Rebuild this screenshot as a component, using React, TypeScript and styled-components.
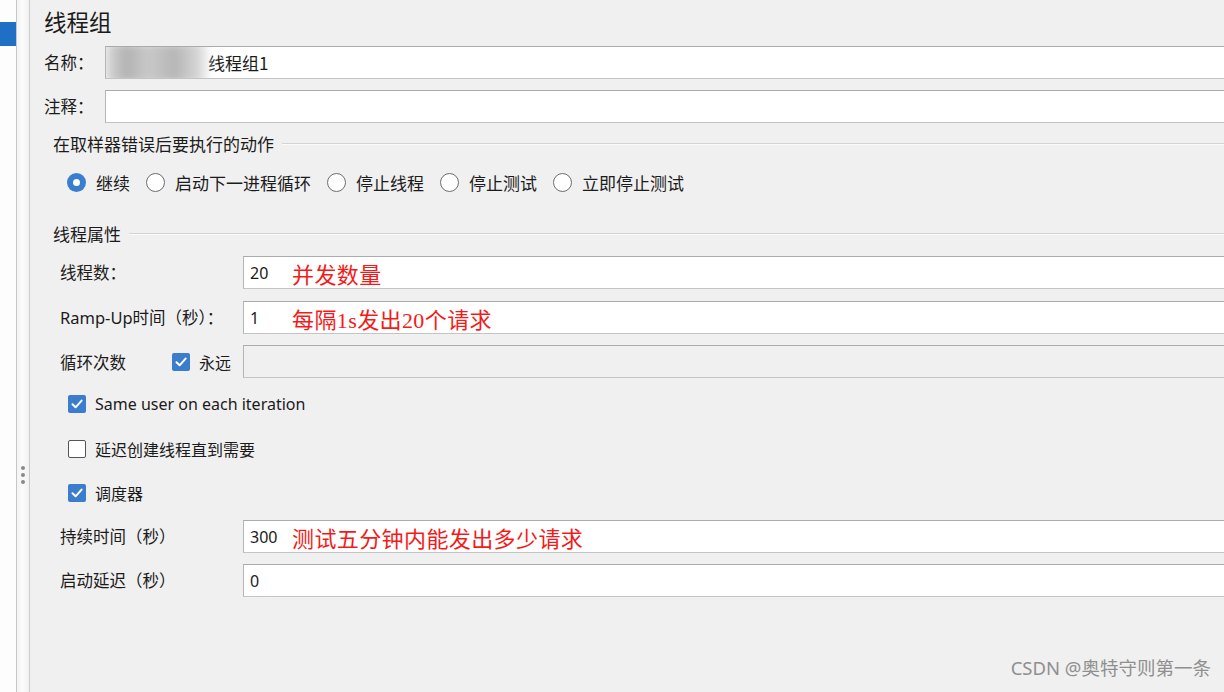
import React from "react";
import styled, { createGlobalStyle } from "styled-components";

const Global = createGlobalStyle`
  html, body { margin: 0; padding: 0; background: #f0f0f0; }
  body { font-family: "Noto Sans", "Noto Sans CJK SC", sans-serif; }
  * { box-sizing: border-box; }
`;

const Page = styled.div`
  position: relative;
  display: flex;
  width: 1224px;
  height: 692px;
  overflow: hidden;
  background: #f0f0f0;
  color: #1b1b1b;
  font-family: "Noto Sans", "Noto Sans CJK SC", sans-serif;
`;

const TreeStrip = styled.div`
  width: 16px;
  flex: none;
  background: #fdfdfd;
  padding-top: 22px;
`;

const Selected = styled.div`
  height: 24px;
  background: #1f6fc5;
`;

const Splitter = styled.div`
  width: 14px;
  flex: none;
  border-left: 1px solid #c6c6c6;
  border-right: 1px solid #cdcdcd;
  background: linear-gradient(to right, #f3f3f3, #fbfbfb 50%, #f1f1f1);
  display: flex;
  flex-direction: column;
  align-items: center;
  padding-top: 466px;
  gap: 3px;
`;

const Dot = styled.span`
  width: 4px;
  height: 4px;
  border-radius: 50%;
  background: #8a8a8a;
`;

const Main = styled.div`
  flex: 1;
  min-width: 0;
  display: flex;
  flex-direction: column;
  background: #f0f0f0;
`;

const Title = styled.div`
  margin: 7px 0 0 14px;
  font-size: 22.5px;
  line-height: 28px;
  font-family: "Noto Sans CJK SC", sans-serif;
`;

const NameRow = styled.div<{ $top: number }>`
  display: grid;
  grid-template-columns: 61px 1fr;
  align-items: center;
  margin-top: ${(p) => p.$top}px;
  padding-left: 14px;
`;

const Label = styled.span`
  font-size: 16.5px;
  line-height: 22px;
  font-family: "Noto Sans", "Noto Sans CJK SC", sans-serif;
  white-space: nowrap;
`;

const Input = styled.div<{ $h?: number; $disabled?: boolean }>`
  position: relative;
  height: ${(p) => p.$h ?? 33}px;
  margin-right: -4px;
  background: ${(p) => (p.$disabled ? "#f0f0f0" : "#ffffff")};
  border: 1px solid #c4c4c4;
  border-top-color: #ababab;
  border-left-color: #b5b5b5;
  display: flex;
  align-items: center;
  padding-left: 6px;
  overflow: hidden;
  font-size: 16px;
  white-space: nowrap;
`;

const Blur = styled.span`
  flex: none;
  width: 103px;
  height: 40px;
  margin-left: -7px;
  background: linear-gradient(
    to right,
    #dcdcdc 0%,
    #b2b2b2 20%,
    #c9c9c9 42%,
    #b6b6b6 68%,
    #d8d8d8 92%,
    #f4f4f4 100%
  );
  filter: blur(4px);
`;

const NameText = styled.span`
  font-size: 17px;
  font-family: "Noto Sans CJK SC", sans-serif;
`;

const GroupHead = styled.div<{ $top: number }>`
  display: flex;
  align-items: center;
  gap: 8px;
  margin-top: ${(p) => p.$top}px;
  padding-left: 23px;
  height: 22px;
  font-size: 17px;
  font-family: "Noto Sans CJK SC", sans-serif;
  &::after {
    content: "";
    flex: 1;
    height: 0;
    border-top: 1px solid #d3d3d3;
    box-shadow: 0 1px 0 #fbfbfb;
  }
`;

const RadioRow = styled.div`
  display: flex;
  align-items: center;
  gap: 16px;
  margin-top: 16px;
  padding-left: 37px;
  height: 24px;
`;

const RadioItem = styled.label`
  display: flex;
  align-items: center;
  gap: 10px;
  font-size: 17px;
  font-family: "Noto Sans CJK SC", sans-serif;
`;

const RadioDot = styled.span<{ $on?: boolean }>`
  width: 19px;
  height: 19px;
  border-radius: 50%;
  flex: none;
  background: ${(p) => (p.$on ? "#3a7fcf" : "#ffffff")};
  border: ${(p) => (p.$on ? "none" : "1.5px solid #6d6d6d")};
  display: flex;
  align-items: center;
  justify-content: center;
  &::after {
    content: "";
    display: ${(p) => (p.$on ? "block" : "none")};
    width: 7px;
    height: 7px;
    border-radius: 50%;
    background: #ffffff;
  }
`;

const FieldRow = styled.div<{ $top: number }>`
  display: grid;
  grid-template-columns: 183px 1fr;
  align-items: center;
  margin-top: ${(p) => p.$top}px;
  padding-left: 30px;
`;

const Value = styled.span`
  font-family: "Noto Sans", sans-serif;
  font-size: 16px;
  width: 42px;
  flex: none;
`;

const Note = styled.span`
  color: #f51a1a;
  font-size: 22px;
  font-family: "Liberation Serif", "Noto Sans CJK SC", serif;
  letter-spacing: 0.4px;
`;

const LoopCell = styled.div`
  display: flex;
  align-items: center;
`;

const LoopLabel = styled(Label)`
  width: 112px;
  font-family: "Noto Sans CJK SC", sans-serif;
`;

const Check = styled.span<{ $on?: boolean }>`
  width: 18px;
  height: 18px;
  flex: none;
  border-radius: 2px;
  background: ${(p) => (p.$on ? "#3b7dcc" : "#ffffff")};
  border: ${(p) => (p.$on ? "none" : "1.5px solid #555555")};
  display: flex;
  align-items: center;
  justify-content: center;
`;

const CheckText = styled.span`
  font-size: 16px;
  margin-left: 9px;
  font-family: "Noto Sans", "Noto Sans CJK SC", sans-serif;
`;

const CheckRow = styled.div<{ $top: number }>`
  display: flex;
  align-items: center;
  height: 24px;
  margin-top: ${(p) => p.$top}px;
  padding-left: 38px;
`;

const Watermark = styled.div`
  position: absolute;
  right: 13px;
  bottom: 12px;
  font-size: 18.5px;
  color: #8f8f8f;
  font-family: "Noto Sans", "Noto Sans CJK SC", sans-serif;
`;

const Tick = () => (
  <svg width="14" height="14" viewBox="0 0 14 14">
    <path
      d="M2.5 7.3 L5.6 10.3 L11.6 3.6"
      fill="none"
      stroke="#ffffff"
      strokeWidth="2"
      strokeLinecap="round"
      strokeLinejoin="round"
    />
  </svg>
);

const CheckBox = ({ on }: { on?: boolean }) => (
  <Check $on={on}>{on ? <Tick /> : null}</Check>
);

const radios = ["继续", "启动下一进程循环", "停止线程", "停止测试", "立即停止测试"];

export default function App() {
  return (
    <Page>
      <Global />
      <TreeStrip>
        <Selected />
      </TreeStrip>
      <Splitter>
        <Dot />
        <Dot />
        <Dot />
      </Splitter>
      <Main>
        <Title>线程组</Title>
        <NameRow $top={11}>
          <Label>名称：</Label>
          <Input>
            <Blur />
            <NameText>线程组1</NameText>
          </Input>
        </NameRow>
        <NameRow $top={11}>
          <Label>注释：</Label>
          <Input />
        </NameRow>

        <GroupHead $top={9}>在取样器错误后要执行的动作</GroupHead>
        <RadioRow>
          {radios.map((r, i) => (
            <RadioItem key={r}>
              <RadioDot $on={i === 0} />
              {r}
            </RadioItem>
          ))}
        </RadioRow>

        <GroupHead $top={28}>线程属性</GroupHead>
        <FieldRow $top={12}>
          <Label>线程数：</Label>
          <Input $h={33}>
            <Value>20</Value>
            <Note>并发数量</Note>
          </Input>
        </FieldRow>
        <FieldRow $top={12}>
          <Label>Ramp-Up时间（秒）：</Label>
          <Input $h={33}>
            <Value>1</Value>
            <Note>每隔1s发出20个请求</Note>
          </Input>
        </FieldRow>
        <FieldRow $top={11}>
          <LoopCell>
            <LoopLabel>循环次数</LoopLabel>
            <CheckBox on />
            <CheckText>永远</CheckText>
          </LoopCell>
          <Input $h={33} $disabled />
        </FieldRow>

        <CheckRow $top={14}>
          <CheckBox on />
          <CheckText>Same user on each iteration</CheckText>
        </CheckRow>
        <CheckRow $top={21}>
          <CheckBox />
          <CheckText>延迟创建线程直到需要</CheckText>
        </CheckRow>
        <CheckRow $top={20}>
          <CheckBox on />
          <CheckText>调度器</CheckText>
        </CheckRow>

        <FieldRow $top={15}>
          <Label>持续时间（秒）</Label>
          <Input $h={33}>
            <Value>300</Value>
            <Note>测试五分钟内能发出多少请求</Note>
          </Input>
        </FieldRow>
        <FieldRow $top={11}>
          <Label>启动延迟（秒）</Label>
          <Input $h={33}>
            <Value>0</Value>
          </Input>
        </FieldRow>
      </Main>
      <Watermark>CSDN @奥特守则第一条</Watermark>
    </Page>
  );
}
